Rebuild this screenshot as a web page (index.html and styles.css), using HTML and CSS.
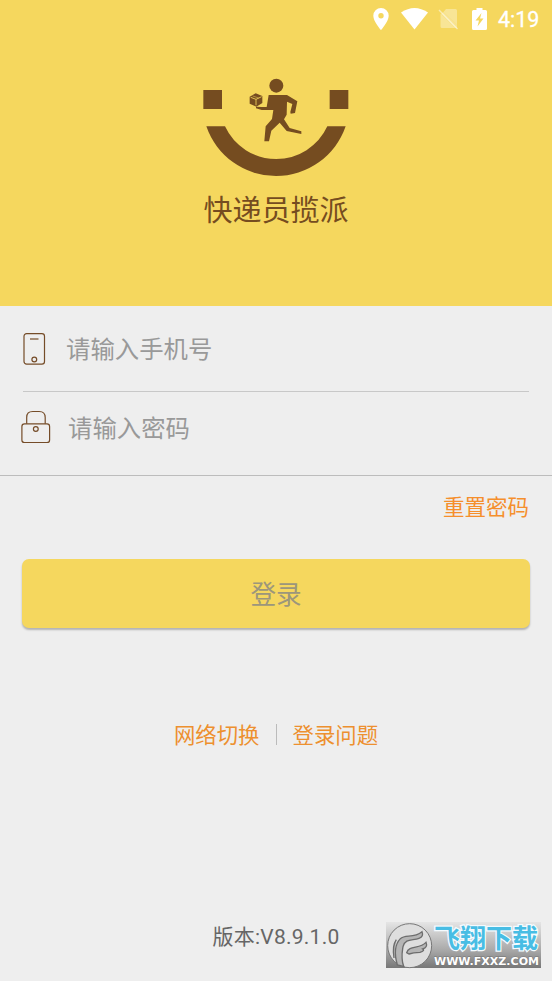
FILE: index.html
```html
<!DOCTYPE html>
<html lang="zh-CN">
<head>
<meta charset="utf-8">
<title>快递员揽派</title>
<link rel="stylesheet" href="styles.css">
</head>
<body>
<main class="screen">
  <header class="hero">
    <div class="status">
      <svg class="pin" width="16" height="22" viewBox="0 0 16 22"><path fill="#fff" fill-rule="evenodd" d="M8 0a7.7 7.7 0 0 0-7.7 7.7C.3 13.5 8 22 8 22s7.700-8.500 7.700-14.300A7.700 7.700 0 0 0 8 0Zm0 5a2.700 2.700 0 1 1 0 5.400A2.700 2.700 0 0 1 8 5Z"/></svg>
      <svg class="wifi" width="27" height="22" viewBox="0 0 27 22"><path fill="#fff" d="M0 4.500Q13.500-4.500 27 4.500L13.500 21.500Z"/></svg>
      <svg class="sim" width="21" height="22" viewBox="0 0 21 22"><path fill="#fff" opacity=".35" d="M8 1h9.500q1.500 0 1.500 1.500v14L5.500 4ZM3 6l14 14H4q-1.500 0-1.500-1.500V6Z"/><path fill="#fff" opacity=".3" d="M5.500 4 19 16.500V20h-2L3 6Z"/><path stroke="#fff" opacity=".5" stroke-width="1.400" d="m1 2 18.500 19"/></svg>
      <svg class="battery" width="15" height="22" viewBox="0 0 15 22"><path fill="#fff" fill-rule="evenodd" d="M4.500 0h6v2h3q1.500 0 1.500 1.500v17q0 1.500-1.500 1.500h-12Q0 22 0 20.500v-17Q0 2 1.500 2h3ZM9.500 5 3.500 12.500H7L5.500 18.500 11.500 10.500H8Z"/></svg>
      <span class="clock">4:19</span>
    </div>
    <svg class="logo" width="146" height="100" viewBox="38 36 438 300" fill="#754c20">
      <path d="M39 72h56v57H39ZM418 72h56v57h-56Z"/>
      <path d="M48 181H104A169.200 169.200 0 0 0 411 181H466A221 221 0 0 1 48 181Z"/>
      <circle cx="258" cy="59" r="21"/>
      <path d="M235 87H290L321 106 314 141 301 143 300 138 306 114 290 107 289 146 281 160 298 186 333 196V204L289 195 268 170 243 194 236 226H222L226 181 245 159 249 132H214L197 127V122L214 123H229Z"/>
      <path d="M178 92 196 82 216 90V111L198 122 178 113Z"/>
      <path d="m181 94 16 6 17-8m-17 8v18" fill="none" stroke="#f5d75e" stroke-width="2.500"/>
      <path d="m187 90 18 6" fill="none" stroke="#f5d75e" stroke-width="1.500"/>
    </svg>
    <h1 class="name">快递员揽派</h1>
  </header>
  <form class="fields">
    <label class="field phone">
      <svg width="30" height="34" viewBox="0 0 30 34" fill="none" stroke="#754c28" stroke-width="1.200"><rect x="3" y="1.600" width="20.500" height="30.500" rx="2.600"/><path d="M9 7h8.500"/><circle cx="13.300" cy="27.500" r="2.400"/></svg>
      <span class="hint">请输入手机号</span>
    </label>
    <label class="field password">
      <svg width="30" height="34" viewBox="0 0 30 34" fill="none" stroke="#754c28" stroke-width="1.200"><path d="M5.700 13.800V7.500q0-6 6-6h6.500q6 0 6 6v6.300"/><rect x=".9" y="13.800" width="27.700" height="18.700" rx="2.600"/><circle cx="14.800" cy="19" r="2.400"/></svg>
      <span class="hint">请输入密码</span>
    </label>
  </form>
  <a class="reset">重置密码</a>
  <button class="login" type="button">登录</button>
  <nav class="links"><a>网络切换</a><i class="bar"></i><a>登录问题</a></nav>
  <footer class="version">版本:V8.9.1.0</footer>
  <aside class="mark">
    <svg width="48" height="48" viewBox="0 0 144 144"><circle cx="71" cy="71" r="66" fill="#dedede" stroke="#777" stroke-width="3"/><path d="M34 129C24 94 27 67 43 50 58 36 82 50 108 29q6 15-9 20C79 56 57 49 51 74c-3 19-7 35 2 59ZM24 108C20 84 21 67 31 53M62 92C69 69 101 82 120 61q6 15-10 20 8 5-8 10-21 1-33 5Z" fill="#b5b5b5" stroke="#6d6d6d" stroke-width="4"/></svg>
    <div class="mark-text"><b>飞翔下载</b><svg class="url" width="106" height="13"><text x="0" y="10" textLength="105" lengthAdjust="spacingAndGlyphs">WWW.FXXZ.COM</text></svg></div>
  </aside>
</main>
</body>
</html>
```
FILE: styles.css
```css
* { box-sizing: border-box; }
body { margin: 0; background: #eee; font-family: Roboto, "Noto Sans CJK SC", sans-serif; }
.screen { position: relative; width: 552px; height: 981px; display: flex; flex-direction: column; background: #eee; overflow: hidden; }
.hero { height: 306px; background: #f5d75e; display: flex; flex-direction: column; align-items: center; flex: none; }
.status { align-self: stretch; height: 38px; display: flex; align-items: center; justify-content: flex-end; padding-right: 12px; color: #fff; }
.status svg { flex: none; }
.pin { margin-right: 12px; }
.wifi { margin-right: 10px; }
.sim { margin-right: 13px; }
.battery { margin-right: 11px; }
.clock { font-size: 21.5px; line-height: 24px; padding-top: 2px; font-weight: 400; -webkit-text-stroke: .3px #fff; width: 42px; white-space: nowrap; }
.logo { margin: 40px 1px 0 0; flex: none; }
.name { margin: 12px 0 0; font-size: 29px; line-height: 42px; font-weight: 400; color: #754c20; }
.fields { height: 170px; border-bottom: 1px solid #bcbcbc; flex: none; }
.field { display: flex; align-items: center; margin: 0 23px 0 21px; }
.phone { height: 86px; margin-left: 23px; border-bottom: 1px solid #c8c8c8; }
.phone svg { margin-left: -2px; }
.phone .hint { margin-left: 15px; padding-top: 2px; }
.password { height: 73px; }
.password svg { margin-bottom: 3px; }
.password .hint { margin-left: 17px; }
.hint { font-size: 24.4px; line-height: 36px; color: #999; }
.reset { align-self: flex-end; margin: 16px 23px 0 0; font-size: 21.5px; line-height: 32px; color: #f58f2c; }
.login { margin: 35px 22px 0; height: 69px; border: 0; border-radius: 7px; background: #f5d75e; box-shadow: 0 2px 2px rgba(0,0,0,.25); font: 400 25.6px/38px Roboto, "Noto Sans CJK SC", sans-serif; color: #9c967c; flex: none; padding: 2px 0 0; }
.links { display: flex; justify-content: center; align-items: center; margin-top: 92px; height: 32px; font-size: 21.4px; line-height: 32px; color: #ed902f; }
.bar { width: 1px; height: 21px; background: #bbb; margin: 0 16px 4px; }
.version { margin-top: 170px; text-align: center; font-size: 21px; letter-spacing: .25px; line-height: 30px; color: #666; }
.mark { position: absolute; left: 385px; top: 921px; width: 157px; height: 48px; display: flex; background: linear-gradient(#e5e5e5, #aaa 60%, #777); border: 1px solid #eee; }
.mark svg { flex: none; }
.mark-text { display: flex; flex-direction: column; }
.mark-text b { font-size: 26px; line-height: 32px; height: 34px; padding-top: 1px; font-weight: 700; color: #48bde4; -webkit-text-stroke: 2.5px #f4fbff; paint-order: stroke fill; white-space: nowrap; }
.url { font: 700 11px "DejaVu Sans", sans-serif; fill: #fff; stroke: #777; stroke-width: 1px; paint-order: stroke fill; }
```
